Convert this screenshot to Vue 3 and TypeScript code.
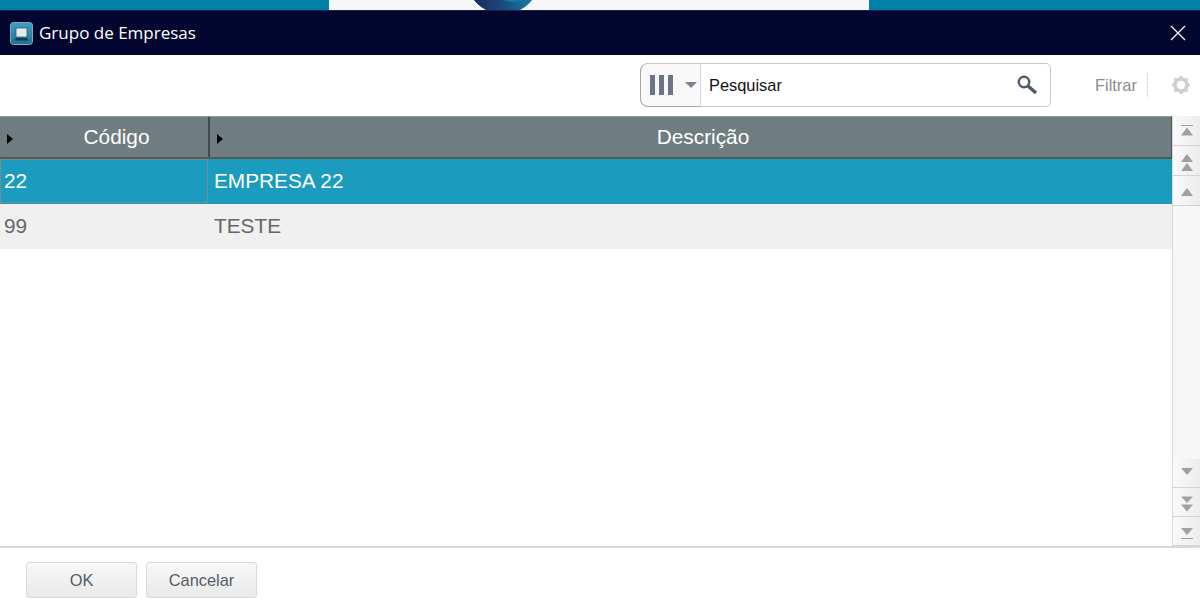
<script setup lang="ts">
interface Row {
  code: string
  desc: string
}

const rows: Row[] = [
  { code: '22', desc: 'EMPRESA 22' },
  { code: '99', desc: 'TESTE' }
]
const selected = 0
</script>

<template>
  <div class="page">
    <div class="strip">
      <div class="strip-center">
        <svg class="logo" width="80" height="10" viewBox="0 0 80 10">
          <defs>
            <linearGradient id="lg" x1="0" y1="0" x2="1" y2="0">
              <stop offset="0" stop-color="#1b1f55" />
              <stop offset="0.55" stop-color="#1d4f80" />
              <stop offset="0.9" stop-color="#157ea6" />
            </linearGradient>
          </defs>
          <circle cx="40" cy="-22.6" r="36.8" fill="url(#lg)" />
          <path d="M40 0h23c-4 2-16 3-23 0z" fill="#0b7ea6" />
        </svg>
      </div>
    </div>

    <header class="titlebar">
      <svg class="app-icon" width="23" height="23" viewBox="0 0 23 23">
        <defs>
          <linearGradient id="ic" x1="0" y1="0" x2="0" y2="1">
            <stop offset="0" stop-color="#3aa0c0" />
            <stop offset="1" stop-color="#1d7394" />
          </linearGradient>
        </defs>
        <rect x="0.5" y="0.5" width="22" height="22" rx="3" fill="url(#ic)" stroke="#8ba8b8" />
        <rect x="6" y="6" width="11" height="9" fill="#e6eaee" stroke="#2f5871" stroke-width="0.8" />
        <path d="M4.500 18.500h14l-1.500-2.500h-11z" fill="#123c5c" />
      </svg>
      <span class="title">Grupo de Empresas</span>
      <svg class="close" width="16" height="16" viewBox="0 0 16 16">
        <path d="M1 1l14 14M15 1L1 15" stroke="#fff" stroke-width="1.2" fill="none" />
      </svg>
    </header>

    <div class="toolbar">
      <div class="search">
        <div class="columns-btn">
          <span class="bars"><i></i><i></i><i></i></span>
          <span class="caret"></span>
        </div>
        <div class="search-text">Pesquisar</div>
        <svg class="lens" width="21" height="21" viewBox="0 0 21 21">
          <circle cx="7" cy="7" r="5.200" fill="none" stroke="#4c5a6b" stroke-width="2.400" />
          <path d="M11 11l8 7" stroke="#4c5a6b" stroke-width="3.400" fill="none" />
        </svg>
      </div>
      <span class="filter">Filtrar</span>
      <span class="dots"></span>
      <svg class="gear" width="20" height="20" viewBox="0 0 20 20">
        <circle cx="10" cy="10" r="6" fill="none" stroke="#cfcfcf" stroke-width="3.600" />
        <path
          d="M10 1v3M10 16v3M1 10h3M16 10h3M3.600 3.600l2.200 2.200M14.200 14.200l2.200 2.200M16.400 3.600l-2.200 2.200M5.800 14.200l-2.200 2.200"
          stroke="#cfcfcf"
          stroke-width="3"
          fill="none"
        />
      </svg>
    </div>

    <main class="content">
      <div class="table">
        <div class="head">
          <div class="th" v-for="label in ['Código', 'Descrição']" :key="label">
            <span class="sort"></span>
            {{ label }}
          </div>
        </div>
        <div
          v-for="(row, i) in rows"
          :key="row.code"
          class="row"
          :class="{ active: i === selected }"
        >
          <div class="cell code">{{ row.code }}</div>
          <div class="cell">{{ row.desc }}</div>
        </div>
      </div>

      <aside class="scroller">
        <div class="group top">
          <button class="sb-btn">
            <svg width="16" height="15" viewBox="0 0 16 15"><path d="M2 2h12v1H2zM8 4.500l6 8H2z" fill="#a0a0a0" /></svg>
          </button>
          <button class="sb-btn">
            <svg width="16" height="22" viewBox="0 0 16 22"><path d="M8 4l6 8H2zM8 13l6 8H2z" fill="#a0a0a0" /></svg>
          </button>
          <button class="sb-btn">
            <svg width="16" height="12" viewBox="0 0 16 12"><path d="M8 3l6 8H2z" fill="#a0a0a0" /></svg>
          </button>
        </div>
        <div class="group">
          <button class="sb-btn">
            <svg width="16" height="10" viewBox="0 0 16 10"><path d="M2 0h12L8 7z" fill="#a0a0a0" /></svg>
          </button>
          <button class="sb-btn">
            <svg width="16" height="20" viewBox="0 0 16 20"><path d="M2 4.500h12L8 11zM2 12.500h12l-6 7z" fill="#a0a0a0" /></svg>
          </button>
          <button class="sb-btn">
            <svg width="16" height="15" viewBox="0 0 16 15"><path d="M2 4h12l-6 7zM2 14h12v1H2z" fill="#a0a0a0" /></svg>
          </button>
        </div>
      </aside>
    </main>

    <footer class="footer">
      <button class="btn">OK</button>
      <button class="btn">Cancelar</button>
    </footer>
  </div>
</template>

<style>
html,
body {
  margin: 0;
  background: #fff;
}
</style>

<style scoped>
.page {
  width: 1200px;
  height: 607px;
  display: flex;
  flex-direction: column;
  overflow: hidden;
  font-family: "Liberation Sans", Arial, sans-serif;
}
.strip {
  height: 10px;
  background: #0080a6;
  display: flex;
  padding-left: 329px;
}
.strip-center {
  width: 540px;
  background: #f6f6f6;
  position: relative;
  overflow: hidden;
}
.logo {
  position: absolute;
  left: 134px;
  top: 0;
}
.titlebar {
  height: 45px;
  background: #03062f;
  border-top: 1px solid #1c2048;
  box-sizing: border-box;
  display: flex;
  align-items: center;
  padding: 0 14px 0 10px;
}
.app-icon {
  margin-right: 6px;
}
.title {
  color: #fff;
  font-family: "Open Sans", "Noto Sans", sans-serif;
  font-size: 17px;
  flex: 1;
  margin-top: -2px;
}
.toolbar {
  height: 61px;
  display: flex;
  align-items: center;
  padding: 0 0 1px 640px;
  box-sizing: border-box;
}
.search {
  width: 411px;
  height: 44px;
  box-sizing: border-box;
  border: 1px solid #c8c8c8;
  border-radius: 8px 5px 5px 8px;
  display: flex;
  align-items: center;
}
.columns-btn {
  width: 61px;
  height: 44px;
  margin-left: -1px;
  box-sizing: border-box;
  border: 1px solid #a8a8a8;
  border-top-color: #c8c8c8;
  border-right-color: #d6d6d6;
  border-radius: 8px 0 0 8px;
  background: #f8f8f8;
  display: flex;
  align-items: center;
  padding-left: 9px;
}
.bars {
  display: flex;
  gap: 4px;
}
.bars i {
  display: block;
  width: 5px;
  height: 20px;
  background: #6d7488;
}
.caret {
  margin-left: 12px;
  margin-top: -1px;
  border-left: 6px solid transparent;
  border-right: 6px solid transparent;
  border-top: 6px solid #7a8290;
}
.search-text {
  flex: 1;
  padding-left: 8px;
  font-size: 16.4px;
  color: #111;
}
.lens {
  margin-right: 12px;
}
.filter {
  margin-left: 44px;
  font-size: 16.4px;
  color: #8a8a90;
}
.dots {
  height: 25px;
  margin-left: 10px;
  margin-right: 23px;
  border-left: 1px dotted #c4c4c4;
}
.gear {
  display: block;
}
.content {
  height: 430px;
  display: flex;
  border-bottom: 2px solid #d8d8d8;
  box-sizing: content-box;
}
.table {
  flex: 1;
  min-width: 0;
}
.head {
  height: 43px;
  box-sizing: border-box;
  display: grid;
  grid-template-columns: 210px 1fr;
  background: #6f7c80;
  border-top: 1px solid #8e999c;
  border-bottom: 2px solid #52595c;
  border-right: 1px solid #4e5558;
}
.th {
  position: relative;
  color: #fff;
  font-size: 20.8px;
  line-height: 40px;
  text-align: center;
  padding-left: 25px;
}
.th:first-child {
  border-right: 2px solid #42494c;
  box-sizing: border-box;
}
.sort {
  position: absolute;
  left: 7px;
  top: 17px;
  border-top: 5px solid transparent;
  border-bottom: 5px solid transparent;
  border-left: 6px solid #000;
}
.row {
  height: 45px;
  display: grid;
  grid-template-columns: 209px 1fr;
  background: #f0f0f0;
  color: #666;
  font-size: 20.8px;
  line-height: 44px;
}
.row.active {
  background: #1b9bbd;
  color: #fff;
}
.cell {
  padding-left: 5px;
  box-sizing: border-box;
}
.cell.code {
  padding-left: 4px;
}
.row.active .cell.code {
  border: 1px dotted #c98064;
  border-top-color: #c98064;
  padding-left: 3px;
  line-height: 42px;
  margin: 0 1px 1px 0;
}
.scroller {
  width: 28px;
  box-sizing: border-box;
  border-left: 1px solid #d8d8d8;
  background: #f7f7f7;
  display: flex;
  flex-direction: column;
  justify-content: space-between;
}
.group {
  display: flex;
  flex-direction: column;
}
.sb-btn {
  height: 29px;
  padding: 0;
  border: none;
  border-bottom: 1px solid #d4d4d4;
  border-radius: 3px 0 0 0;
  background: linear-gradient(to right, #fafafa, #ececec);
  display: flex;
  align-items: center;
  justify-content: center;
}
.group.top .sb-btn {
  height: 30px;
}
.footer {
  flex: 1;
  display: flex;
  gap: 9px;
  padding: 14px 0 0 26px;
  align-items: flex-start;
}
.btn {
  width: 111px;
  height: 36px;
  box-sizing: border-box;
  border: 1px solid #d9d9d9;
  border-radius: 3px;
  background: linear-gradient(to bottom, #f8f8f8, #e9e9e9);
  color: #555b66;
  font-family: "Liberation Sans", Arial, sans-serif;
  font-size: 16.4px;
  padding: 0;
}
</style>
